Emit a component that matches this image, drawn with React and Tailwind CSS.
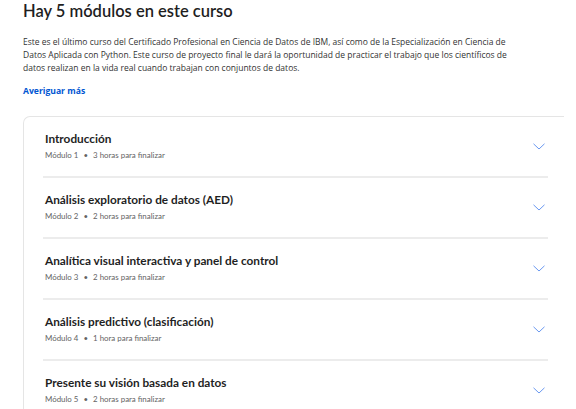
import React from "react";

const modules = [
  { title: "Introducción", sub: "Módulo 1", time: "3 horas para finalizar" },
  { title: "Análisis exploratorio de datos (AED)", sub: "Módulo 2", time: "2 horas para finalizar" },
  { title: "Analítica visual interactiva y panel de control", sub: "Módulo 3", time: "2 horas para finalizar" },
  { title: "Análisis predictivo (clasificación)", sub: "Módulo 4", time: "1 hora para finalizar" },
  { title: "Presente su visión basada en datos", sub: "Módulo 5", time: "2 horas para finalizar" },
];

function Chevron() {
  return (
    <svg width="12" height="7" viewBox="0 0 12 7" className="shrink-0">
      <path d="M0.5 0.8 L6 6 L11.5 0.8" fill="none" stroke="#6a98f0" strokeWidth="1" />
    </svg>
  );
}

export default function App() {
  return (
    <div className="w-[576px] h-[409px] overflow-hidden bg-white pl-[23px] font-['Open_Sans',sans-serif]">
      <h2 className="text-[16.5px] leading-[22px] font-semibold text-[#1f1f1f] font-['Lato',sans-serif]">
        Hay 5 módulos en este curso
      </h2>
      <p className="mt-[13px] w-[500px] text-[8.5px] leading-[13px] text-[#333]">
        Este es el último curso del Certificado Profesional en Ciencia de Datos de IBM, así como de la Especialización en Ciencia de Datos Aplicada con Python. Este curso de proyecto final le dará la oportunidad de practicar el trabajo que los científicos de datos realizan en la vida real cuando trabajan con conjuntos de datos.
      </p>
      <a className="block mt-[11px] text-[8.6px] leading-[13px] font-bold text-[#0056d2]">Averiguar más</a>
      <div className="mt-[18px] w-[541px] border-l border-t border-[#e5e5e5] rounded-tl-[7px]">
        {modules.map((m, i) => (
          <div key={i} className="ml-[19px] mr-[16px] h-[61px] border-b-2 border-[#ececec] flex items-center justify-between pl-[2px] pr-[3px]">
            <div className="pb-[3px]">
              <div className="text-[11.8px] leading-[16px] font-bold text-[#1f1f1f] font-['Lato',sans-serif]">{m.title}</div>
              <div className="mt-[3px] text-[7.9px] leading-[10px] text-[#636363] font-['Lato',sans-serif]">
                {m.sub} <span className="mx-[3px]">•</span> {m.time}
              </div>
            </div>
            <Chevron />
          </div>
        ))}
      </div>
    </div>
  );
}
